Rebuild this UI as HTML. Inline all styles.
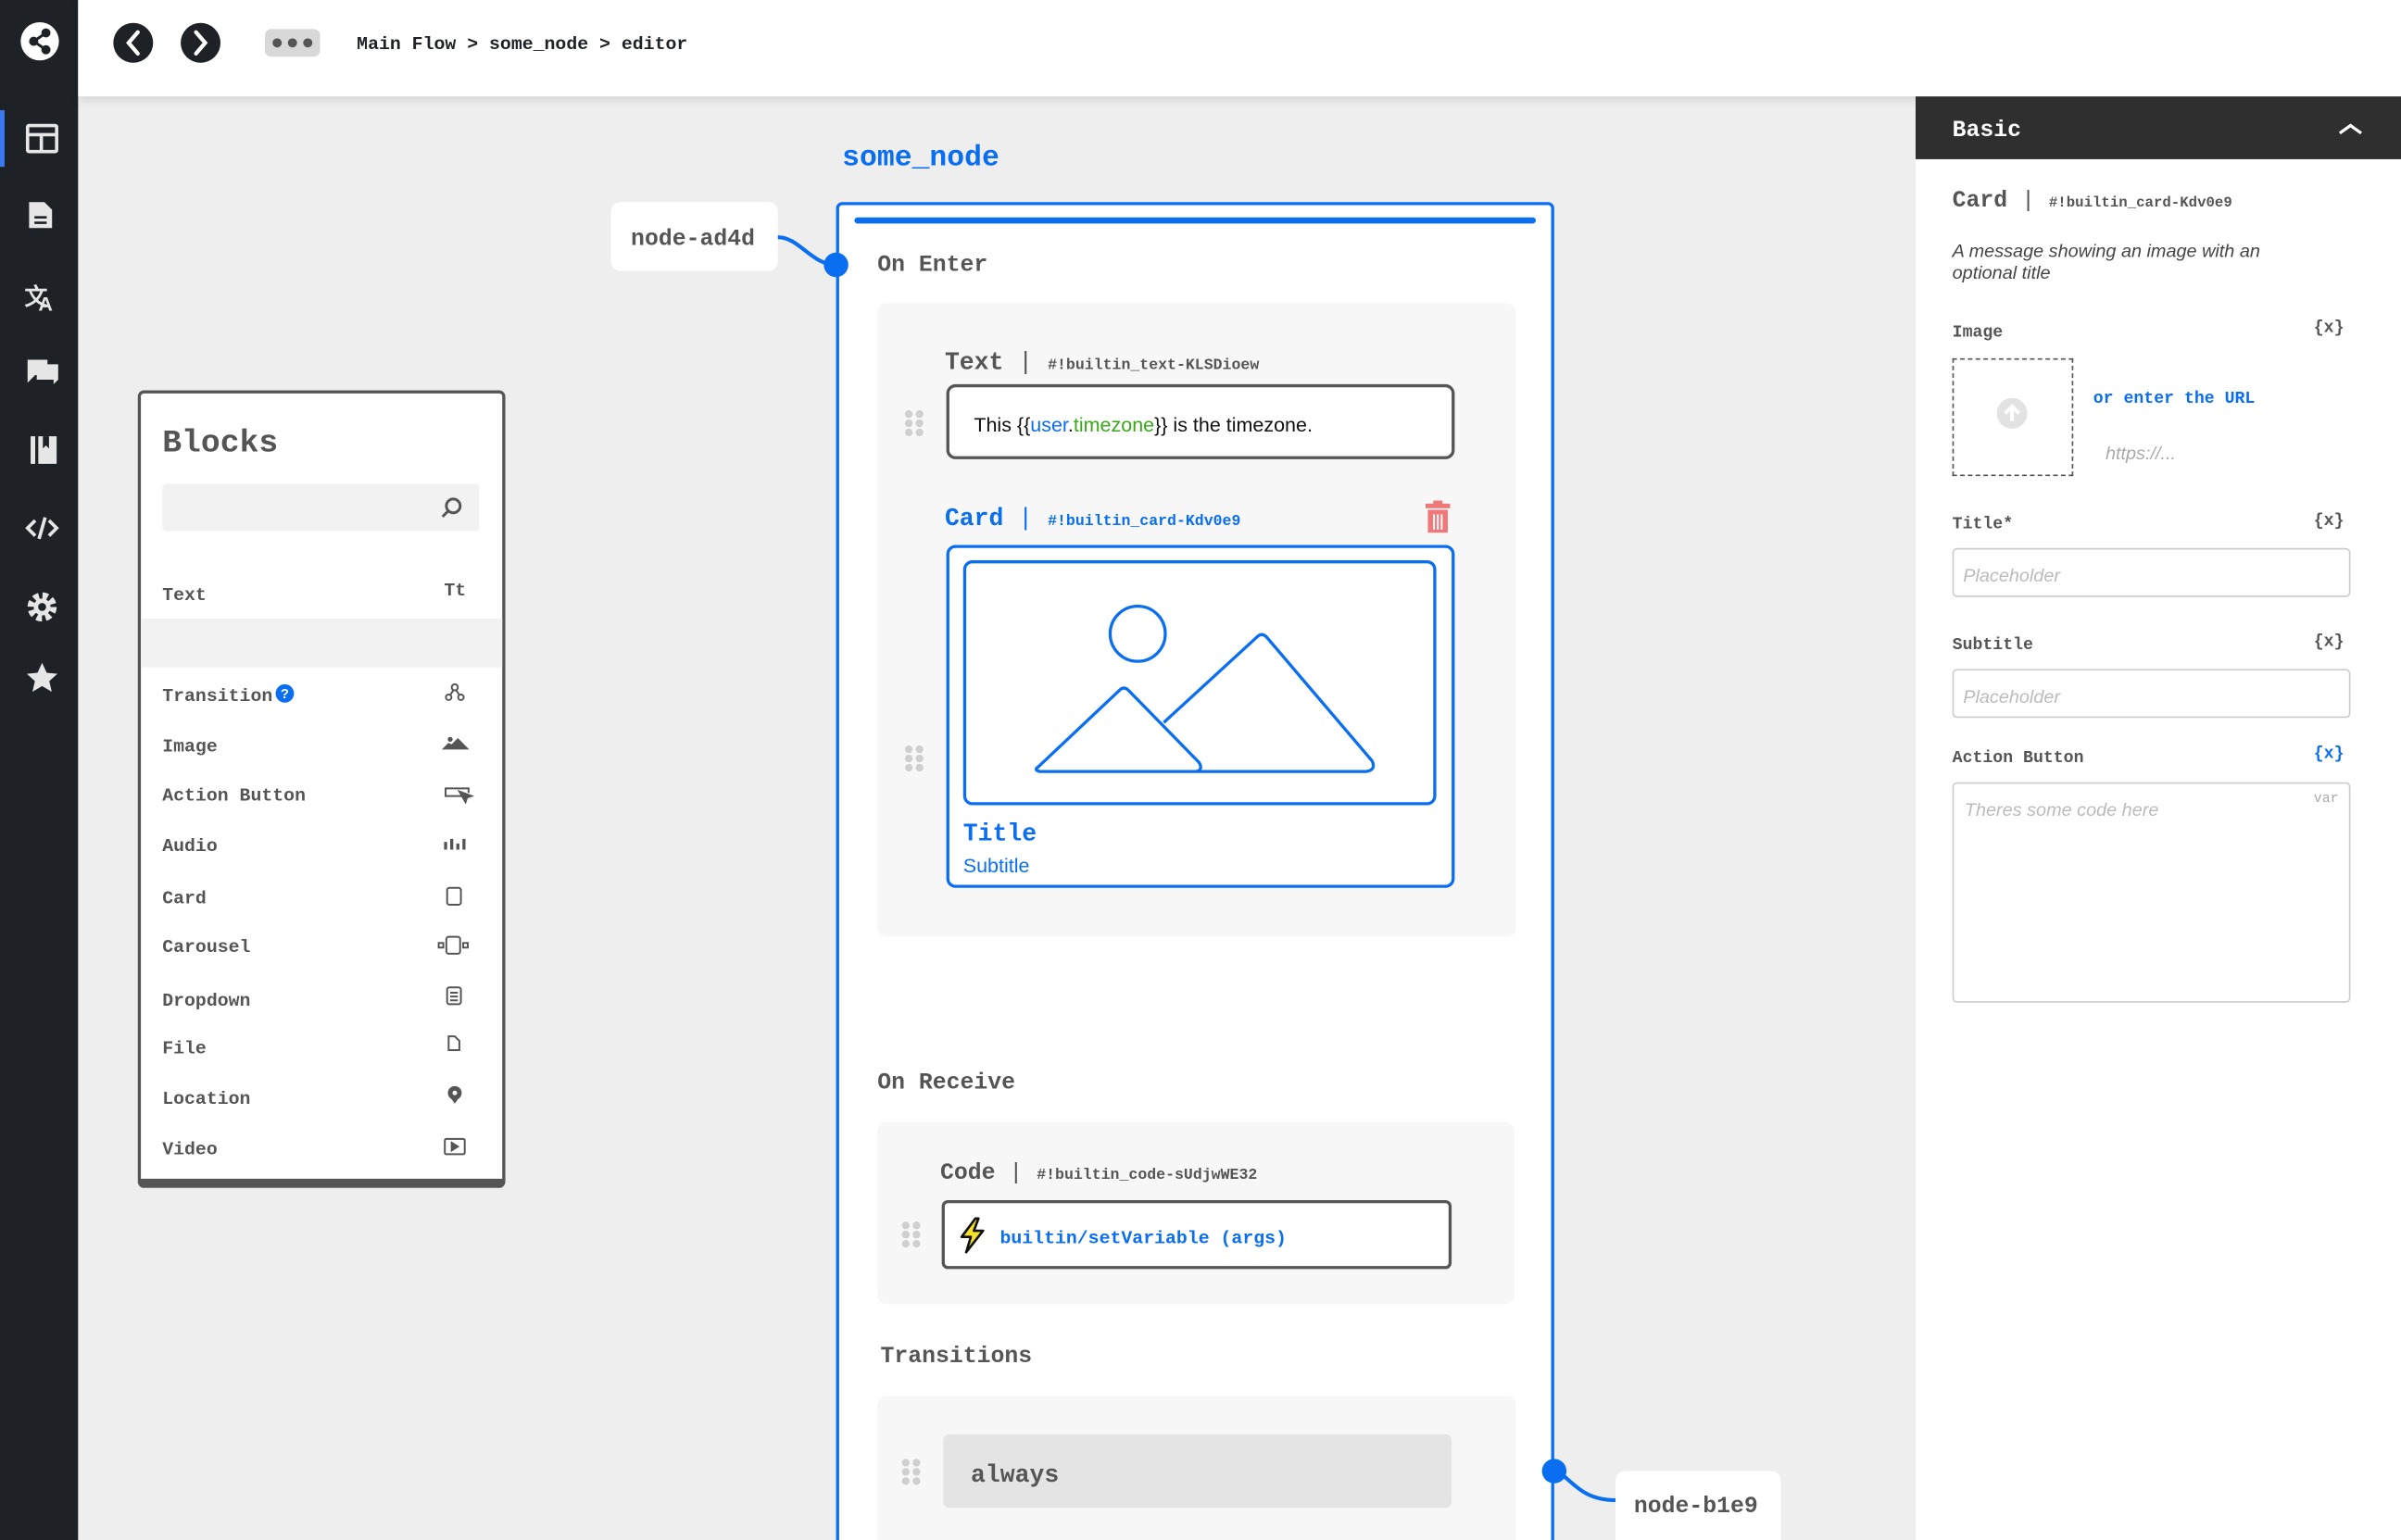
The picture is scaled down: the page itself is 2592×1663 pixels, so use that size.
<!DOCTYPE html>
<html><head><meta charset="utf-8"><style>
*{margin:0;padding:0;box-sizing:border-box}
html,body{width:2592px;height:1658px;overflow:hidden;background:#eee}
#w{position:absolute;left:0;top:0;width:1568px;height:1006px;overflow:hidden;transform:scale(1.653061);transform-origin:0 0;background:#eeeeee;font-family:"Liberation Mono",monospace;color:#555}
.a{position:absolute}
.t{position:absolute;white-space:nowrap;line-height:1;margin-top:2px}
.m{font-family:"Liberation Mono",monospace;font-weight:bold}
.s{font-family:"Liberation Sans",sans-serif}
.blue{color:#0a6ef0}
.grip{position:absolute;width:12px;height:17px}
.grip i{position:absolute;width:5px;height:5px;border-radius:50%;background:#cfcfcf}
</style></head><body><div id="w">
<!-- sidebar -->
<div class="a" style="left:0;top:0;width:51px;height:1010px;background:#1e2126"></div>
<div class="a" style="left:0;top:72px;width:3px;height:37px;background:#3c78f0"></div>
<svg class="a" style="left:0;top:0" width="51" height="470" viewBox="0 0 51 470">
<circle cx="26" cy="27" r="12.5" fill="#fff"/>
<g fill="#1e2126"><circle cx="30" cy="21.5" r="3"/><circle cx="22" cy="27" r="3"/><circle cx="30" cy="32.5" r="3"/></g>
<path d="M30 21.5L22 27L30 32.5" stroke="#1e2126" stroke-width="1.8" fill="none"/>
<g fill="none" stroke="#e6e6e6" stroke-width="2.2"><rect x="18" y="82" width="19" height="17" rx="1"/><path d="M18 88H37M27 88V99"/></g>
<path d="M19 132h10l5 5v12h-15z" fill="#e6e6e6"/><path d="M22.5 142h8M22.5 145.5h8" stroke="#1e2126" stroke-width="1.6"/>
<text x="16" y="199" font-family="Liberation Sans" font-weight="bold" font-size="15" fill="#e6e6e6">文</text>
<text x="25" y="203" font-family="Liberation Sans" font-weight="bold" font-size="13" fill="#e6e6e6">A</text>
<path d="M18 235h13v10h-8l-5 5z" fill="#e6e6e6"/><path d="M24 238h14v10l-3 3v-3h-11z" fill="#e6e6e6"/>
<path d="M20 285h3v18h-3zM25 285h12v18h-12z" fill="#e6e6e6"/><path d="M28 285v8l2-2 2 2v-8z" fill="#1e2126"/>
<path d="M23 340l-5 5 5 5M32 340l5 5-5 5M29.5 338l-4 14" stroke="#e6e6e6" stroke-width="2.2" fill="none"/>
<circle cx="27.5" cy="396.5" r="7" fill="none" stroke="#e6e6e6" stroke-width="5" stroke-dasharray="3.3 2.2"/><circle cx="27.5" cy="396.5" r="5.5" fill="#e6e6e6"/><circle cx="27.5" cy="396.5" r="2.6" fill="#1e2126"/>
<path d="M27.5 433l3 6.5 7 .7-5.3 4.7 1.6 7-6.3-3.7-6.3 3.7 1.6-7-5.3-4.7 7-.7z" fill="#e6e6e6"/>
</svg>
<!-- top bar -->
<div class="a" style="left:51px;top:0;width:1517px;height:63px;background:#fff;box-shadow:0 2px 6px rgba(0,0,0,.12)"></div>
<svg class="a" style="left:60px;top:0" width="160" height="60">
<circle cx="27" cy="28" r="13" fill="#1e2126"/><path d="M30 21l-6 7 6 7" stroke="#fff" stroke-width="2.6" fill="none" stroke-linecap="round"/>
<circle cx="71" cy="28" r="13" fill="#1e2126"/><path d="M68 21l6 7-6 7" stroke="#fff" stroke-width="2.6" fill="none" stroke-linecap="round"/>
<rect x="113" y="19" width="36" height="18" rx="4" fill="#d8d8d8"/><circle cx="121" cy="28" r="3" fill="#555"/><circle cx="131" cy="28" r="3" fill="#555"/><circle cx="141" cy="28" r="3" fill="#555"/>
</svg>
<div class="t m" style="left:233px;top:21px;font-size:12px;color:#1e2126">Main Flow &gt; some_node &gt; editor</div>
<!-- title -->
<div class="t m blue" style="left:550px;top:92px;font-size:19px">some_node</div>
<!-- node-ad4d -->
<div class="a" style="left:399px;top:132px;width:109px;height:45px;background:#fff;border-radius:6px"></div>
<div class="t m" style="left:412px;top:147px;font-size:15px;color:#555;font-weight:bold">node-ad4d</div>
<!-- main node -->
<div class="a" style="left:546px;top:132px;width:469px;height:890px;background:#fff;border:2px solid #0a6ef0;border-radius:4px"></div>
<div class="a" style="left:558px;top:142px;width:445px;height:4px;background:#0a6ef0;border-radius:2px"></div>
<svg class="a" style="left:500px;top:140px" width="60" height="50"><path d="M8 15C22 15 30 33 46 33" stroke="#0a6ef0" stroke-width="2.5" fill="none"/><circle cx="46" cy="33" r="8" fill="#0a6ef0"/></svg>
<div class="t m" style="left:573px;top:164px;font-size:15px">On Enter</div>
<div class="a" style="left:573px;top:198px;width:417px;height:414px;background:#f7f7f7;border-radius:6px"></div>
<div class="t m" style="left:617px;top:227px;font-size:16px">Text <span style="font-weight:normal">|</span> <span style="font-size:10px">#!builtin_text-KLSDioew</span></div>
<div class="a" style="left:618px;top:251px;width:332px;height:49px;background:#fff;border:2px solid #555;border-radius:6px"></div>
<div class="t s" style="left:636px;top:269px;font-size:13px;color:#111">This {{<span style="color:#0a6ef0">user</span>.<span style="color:#3aa81a">timezone</span>}} is the timezone.</div>
<div class="grip" style="left:591px;top:268px"><i style="left:0;top:0"></i><i style="left:7px;top:0"></i><i style="left:0;top:6px"></i><i style="left:7px;top:6px"></i><i style="left:0;top:12px"></i><i style="left:7px;top:12px"></i></div>
<div class="t m blue" style="left:617px;top:329px;font-size:16px">Card <span style="font-weight:normal">|</span> <span style="font-size:10px">#!builtin_card-Kdv0e9</span></div>
<svg class="a" style="left:930px;top:327px" width="18" height="22"><rect x="1" y="2" width="16" height="3" fill="#f07878"/><rect x="6" y="0" width="6" height="3" fill="#f07878"/><path d="M2.5 6h13v15h-13z" fill="#f07878"/><path d="M6.5 9v10M9 9v10M11.5 9v10" stroke="#fff" stroke-width="1.2"/></svg>
<div class="a" style="left:618px;top:356px;width:332px;height:224px;border:2px solid #0a6ef0;border-radius:6px;background:#fff"></div>
<div class="a" style="left:629px;top:366px;width:309px;height:160px;border:2px solid #0a6ef0;border-radius:6px"></div>
<svg class="a" style="left:629px;top:366px" width="309" height="160" fill="none" stroke="#0a6ef0" stroke-width="2"><circle cx="114" cy="48" r="18"/><path d="M49 135L102 85q3-3 6 0l46 47q3 5-2 6H50q-4-1-1-3zM131 106l61-56q3-3 6 0l69 81q3 6-4 7H151"/></svg>
<div class="t m blue" style="left:629px;top:535px;font-size:16px">Title</div>
<div class="t s blue" style="left:629px;top:557px;font-size:13px">Subtitle</div>
<div class="grip" style="left:591px;top:487px"><i style="left:0;top:0"></i><i style="left:7px;top:0"></i><i style="left:0;top:6px"></i><i style="left:7px;top:6px"></i><i style="left:0;top:12px"></i><i style="left:7px;top:12px"></i></div>
<div class="t m" style="left:573px;top:698px;font-size:15px">On Receive</div>
<div class="a" style="left:573px;top:733px;width:416px;height:119px;background:#f7f7f7;border-radius:6px"></div>
<div class="t m" style="left:614px;top:757px;font-size:15px">Code <span style="font-weight:normal">|</span> <span style="font-size:10px">#!builtin_code-sUdjwWE32</span></div>
<div class="a" style="left:615px;top:784px;width:333px;height:45px;background:#fff;border:2px solid #555;border-radius:4px"></div>
<svg class="a" style="left:625px;top:795px" width="20" height="24"><path d="M12 1L3 13h6l-3 10 11-14h-6l3-8z" fill="#f5e12a" stroke="#111" stroke-width="1.6" stroke-linejoin="round"/></svg>
<div class="t m blue" style="left:653px;top:801px;font-size:12px">builtin/setVariable (args)</div>
<div class="grip" style="left:589px;top:798px"><i style="left:0;top:0"></i><i style="left:7px;top:0"></i><i style="left:0;top:6px"></i><i style="left:7px;top:6px"></i><i style="left:0;top:12px"></i><i style="left:7px;top:12px"></i></div>
<div class="t m" style="left:575px;top:877px;font-size:15px">Transitions</div>
<div class="a" style="left:573px;top:912px;width:417px;height:100px;background:#f7f7f7;border-radius:6px"></div>
<div class="a" style="left:616px;top:937px;width:332px;height:48px;background:#e4e4e4;border-radius:4px"></div>
<div class="t m" style="left:634px;top:954px;font-size:16px">always</div>
<div class="grip" style="left:589px;top:953px"><i style="left:0;top:0"></i><i style="left:7px;top:0"></i><i style="left:0;top:6px"></i><i style="left:7px;top:6px"></i><i style="left:0;top:12px"></i><i style="left:7px;top:12px"></i></div>
<svg class="a" style="left:1000px;top:945px" width="60" height="45"><path d="M15 16C25 18 30 35 55 35" stroke="#0a6ef0" stroke-width="2.5" fill="none"/><circle cx="15" cy="16" r="8" fill="#0a6ef0"/></svg>
<div class="a" style="left:1055px;top:961px;width:108px;height:50px;background:#fff;border-radius:6px"></div>
<div class="t m" style="left:1067px;top:975px;font-size:15px">node-b1e9</div>
<!-- blocks panel -->
<div class="a" style="left:90px;top:255px;width:240px;height:521px;background:#fff;border:2px solid #555;border-bottom-width:6px;border-radius:4px"></div>
<div class="t m" style="left:106px;top:278px;font-size:21px">Blocks</div>
<div class="a" style="left:106px;top:316px;width:207px;height:31px;background:#f2f2f2;border-radius:3px"></div>
<svg class="a" style="left:287px;top:324px" width="16" height="16" fill="none" stroke="#555" stroke-width="1.8"><circle cx="9" cy="6.5" r="4.5"/><path d="M5.8 9.7L2 13.5"/></svg>
<div class="a" style="left:92px;top:404px;width:236px;height:32px;background:#f2f2f2"></div>
<div class="t m" style="left:106px;top:381px;font-size:12px">Text</div><div class="t m" style="left:290px;top:378px;font-size:12px">Tt</div>
<div class="t m" style="left:106px;top:447px;font-size:12px">Transition</div>
<div class="a" style="left:180px;top:447px;width:12px;height:12px;border-radius:50%;background:#0a6ef0;color:#fff;font:bold 9px 'Liberation Sans';text-align:center;line-height:12px">?</div>
<div class="t m" style="left:106px;top:480px;font-size:12px">Image</div>
<div class="t m" style="left:106px;top:512px;font-size:12px">Action Button</div>
<div class="t m" style="left:106px;top:545px;font-size:12px">Audio</div>
<div class="t m" style="left:106px;top:579px;font-size:12px">Card</div>
<div class="t m" style="left:106px;top:611px;font-size:12px">Carousel</div>
<div class="t m" style="left:106px;top:646px;font-size:12px">Dropdown</div>
<div class="t m" style="left:106px;top:677px;font-size:12px">File</div>
<div class="t m" style="left:106px;top:710px;font-size:12px">Location</div>
<div class="t m" style="left:106px;top:743px;font-size:12px">Video</div>
<svg class="a" style="left:280px;top:440px" width="35" height="320" fill="none" stroke="#555" stroke-width="1.2">
<circle cx="17" cy="9" r="2"/><circle cx="13" cy="15.5" r="1.8"/><circle cx="21" cy="15.5" r="1.8"/><path d="M16 11l-2 3M18 11l2 3"/>
<path d="M10 49l3-3 2 1 4-4 6 6z" fill="#555"/><circle cx="14" cy="43" r="1" fill="#555"/>
<path d="M22 80h-11v-5h15v3"/><path d="M20 77l8 3-3 1-1 3z" fill="#555"/>
<path d="M11 110v5M15 108v7M19 111v4M23 108v7" stroke-width="2"/>
<rect x="12" y="140" width="9" height="11" rx="1.5"/>
<rect x="11.5" y="172" width="9" height="11" rx="1.5"/><rect x="6.5" y="176" width="3" height="3"/><rect x="22.5" y="176" width="3" height="3"/>
<rect x="12" y="205" width="9" height="11" rx="1.5"/><path d="M14 208.5h5M14 211h5M14 213.5h5"/>
<path d="M13 237h4l3 3v6h-7z"/>
<circle cx="17" cy="274" r="4.5" fill="#555" stroke="none"/><path d="M13.5 276l3.5 5 3.5-5z" fill="#555" stroke="none"/><circle cx="17" cy="274" r="1.5" fill="#fff" stroke="none"/>
<rect x="10.5" y="304" width="13" height="10" rx="1"/><path d="M15 306.5l4 2.5-4 2.5z" fill="#555"/>
</svg>
<!-- right panel -->
<div class="a" style="left:1251px;top:63px;width:317px;height:950px;background:#fff"></div>
<div class="a" style="left:1251px;top:63px;width:317px;height:41px;background:#2f2f2f"></div>
<div class="t m" style="left:1275px;top:76px;font-size:15px;color:#fff">Basic</div>
<svg class="a" style="left:1526px;top:78px" width="18" height="12"><path d="M2 9l7-5 7 5" stroke="#fff" stroke-width="2" fill="none"/></svg>
<div class="t m" style="left:1275px;top:122px;font-size:15px">Card <span style="font-weight:normal">|</span> <span style="font-size:9.5px">#!builtin_card-Kdv0e9</span></div>
<div class="a s" style="left:1275px;top:157px;width:240px;font-size:12px;line-height:14px;font-style:italic;color:#444">A message showing an image with an optional title</div>
<div class="t m" style="left:1275px;top:211px;font-size:11px">Image</div><div class="t m" style="left:1511px;top:208px;font-size:11px">{x}</div>
<div class="a" style="left:1275px;top:234px;width:79px;height:77px;border:1.3px dashed #555"></div>
<svg class="a" style="left:1303px;top:259px" width="22" height="22"><circle cx="11" cy="11" r="10" fill="#e2e2e2"/><path d="M11 16V7M6.5 11l4.5-4.5 4.5 4.5" stroke="#fff" stroke-width="2.4" fill="none"/></svg>
<div class="t m blue" style="left:1367px;top:254px;font-size:11px">or enter the URL</div>
<div class="t s" style="left:1375px;top:288px;font-size:12px;color:#aaa;font-style:italic">https://...</div>
<div class="t m" style="left:1275px;top:336px;font-size:11px">Title*</div><div class="t m" style="left:1511px;top:334px;font-size:11px">{x}</div>
<div class="a" style="left:1275px;top:358px;width:260px;height:32px;border:1px solid #ccc;border-radius:3px"></div>
<div class="t s" style="left:1282px;top:368px;font-size:12px;color:#bbb;font-style:italic">Placeholder</div>
<div class="t m" style="left:1275px;top:415px;font-size:11px">Subtitle</div><div class="t m" style="left:1511px;top:413px;font-size:11px">{x}</div>
<div class="a" style="left:1275px;top:437px;width:260px;height:32px;border:1px solid #ccc;border-radius:3px"></div>
<div class="t s" style="left:1282px;top:447px;font-size:12px;color:#bbb;font-style:italic">Placeholder</div>
<div class="t m" style="left:1275px;top:489px;font-size:11px">Action Button</div><div class="t m blue" style="left:1511px;top:486px;font-size:11px">{x}</div>
<div class="a" style="left:1275px;top:511px;width:260px;height:144px;border:1px solid #ccc;border-radius:3px"></div>
<div class="t s" style="left:1283px;top:521px;font-size:12px;color:#bbb;font-style:italic">Theres some code here</div>
<div class="t" style="left:1511px;top:516px;font-size:9px;color:#aaa">var</div>
</div></body></html>
